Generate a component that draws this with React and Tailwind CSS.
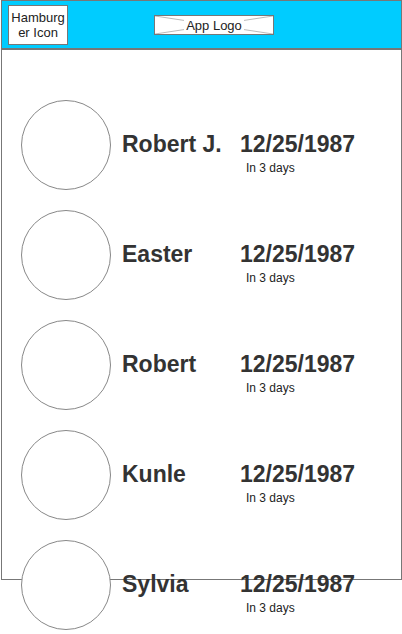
import React from 'react';

const people = [
  { id: 1, name: 'Robert J.', date: '12/25/1987', note: 'In 3 days' },
  { id: 2, name: 'Easter', date: '12/25/1987', note: 'In 3 days' },
  { id: 3, name: 'Robert', date: '12/25/1987', note: 'In 3 days' },
  { id: 4, name: 'Kunle', date: '12/25/1987', note: 'In 3 days' },
  { id: 5, name: 'Sylvia', date: '12/25/1987', note: 'In 3 days' },
];

function LogoPlaceholder() {
  return (
    <div className="relative w-[120px] h-[20px] bg-white border border-[#777]">
      {/* cross lines of the image placeholder */}
      <svg className="absolute inset-0 w-full h-full" viewBox="0 0 118 18" preserveAspectRatio="none">
        <line x1="0" y1="0" x2="118" y2="18" stroke="#aaa" strokeWidth="0.8" />
        <line x1="0" y1="18" x2="118" y2="0" stroke="#aaa" strokeWidth="0.8" />
      </svg>
      <div className="relative flex h-full items-center justify-center">
        <span className="bg-white px-[2px] text-[13px] leading-none text-[#222]">App Logo</span>
      </div>
    </div>
  );
}

function App() {
  return (
    <div className="w-[402px] h-[634px] bg-white overflow-hidden" style={{ fontFamily: '"Liberation Sans", Arial, sans-serif' }}>
      <div className="ml-[1px] w-[401px] h-[580px] border border-[#777]">
        {/* Header */}
        <div className="relative flex h-[49px] items-start bg-[#00ccff] border-b-2 border-[#777]">
          <div className="mt-[4px] ml-[6px] flex h-[40px] w-[60px] flex-col items-center justify-center border border-[#777] bg-white text-[13px] leading-[15px] text-[#222]">
            <span>Hamburg</span>
            <span>er Icon</span>
          </div>
          <div className="ml-[86px] mt-[14px]">
            <LogoPlaceholder />
          </div>
        </div>

        {/* List of birthdays */}
        <div className="flex flex-col gap-[20px] pt-[50px]">
          {people.map((p) => (
            <div key={p.id} className="flex items-start">
              <div className="ml-[19px] h-[90px] w-[90px] shrink-0 rounded-full border border-[#888] bg-white" />
              <div className="ml-[11px] mt-[32px] w-[118px] text-[23px] font-bold leading-[24px] text-[#333]">
                {p.name}
              </div>
              <div className="mt-[32px] flex flex-col">
                <span className="text-[23px] font-bold leading-[24px] text-[#333]">{p.date}</span>
                <span className="ml-[6px] mt-[5px] text-[12px] leading-[14px] text-[#222]">{p.note}</span>
              </div>
            </div>
          ))}
        </div>
      </div>
    </div>
  );
}

export default App;
